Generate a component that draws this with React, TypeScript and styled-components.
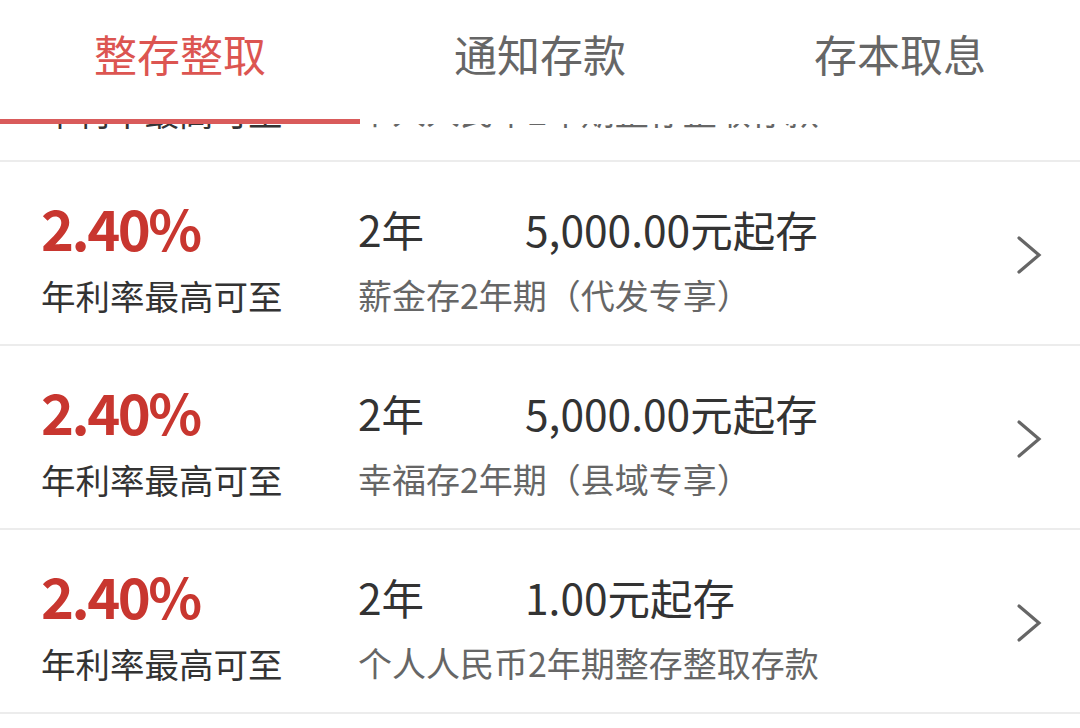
import React, { useState } from 'react'
import styled, { createGlobalStyle } from 'styled-components'

const GlobalStyle = createGlobalStyle`
  html, body {
    margin: 0;
    padding: 0;
    background: #ffffff;
  }
  body {
    font-family: "Noto Sans CJK SC", "Noto Sans", sans-serif;
    -webkit-font-smoothing: antialiased;
  }
`

const Page = styled.div`
  height: 728px;
  overflow: hidden;
  background: #ffffff;
`

const TabBar = styled.div`
  position: sticky;
  top: 0;
  z-index: 2;
  display: grid;
  grid-template-columns: repeat(3, 1fr);
  height: 124px;
  background: #ffffff;
`

const Tab = styled.div<{ $active?: boolean }>`
  box-sizing: border-box;
  height: 124px;
  padding-top: 23px;
  text-align: center;
  font-size: 43px;
  line-height: 60px;
  color: ${p => (p.$active ? '#dc5551' : '#666666')};
  border-bottom: 5px solid ${p => (p.$active ? '#d95b5b' : 'transparent')};
  cursor: pointer;
`

// 첫 줄은 탭 아래로 스크롤된 상태
const List = styled.div`
  margin-top: -146px;
`

const Row = styled.div`
  box-sizing: border-box;
  display: flex;
  align-items: flex-start;
  height: 184px;
  padding: 35px 0 0 41px;
  border-bottom: 2px solid #ececec;
`

const RateCol = styled.div`
  display: flex;
  flex-direction: column;
  gap: 18px;
  width: 317px;
  flex-shrink: 0;
`

const Rate = styled.div`
  font-size: 56px;
  line-height: 60px;
  font-weight: 700;
  color: #c8362f;
  letter-spacing: -2.5px;
`

const RateLabel = styled.div`
  font-size: 34.5px;
  line-height: 40px;
  color: #333333;
`

const InfoCol = styled.div`
  display: flex;
  flex-direction: column;
  gap: 14px;
`

const InfoTop = styled.div`
  display: flex;
  font-size: 42.5px;
  line-height: 64px;
  color: #333333;
`

const Term = styled.span`
  width: 167px;
`

const Desc = styled.div`
  font-size: 34px;
  line-height: 40px;
  color: #666666;
`

const Arrow = styled.svg`
  margin: 38px 38px 0 auto;
  flex-shrink: 0;
`

type Product = {
  rate: string
  term: string
  amount: string
  name: string
}

const products: Product[] = [
  { rate: '2.40%', term: '2年', amount: '1.00元起存', name: '个人人民币2年期整存整取存款' },
  { rate: '2.40%', term: '2年', amount: '5,000.00元起存', name: '薪金存2年期（代发专享）' },
  { rate: '2.40%', term: '2年', amount: '5,000.00元起存', name: '幸福存2年期（县域专享）' },
  { rate: '2.40%', term: '2年', amount: '1.00元起存', name: '个人人民币2年期整存整取存款' },
]

const tabs = ['整存整取', '通知存款', '存本取息']

function App() {
  const [active, setActive] = useState(0)

  return (
    <>
      <GlobalStyle />
      <Page>
        <TabBar>
          {tabs.map((t, i) => (
            <Tab key={t} $active={i === active} onClick={() => setActive(i)}>
              {t}
            </Tab>
          ))}
        </TabBar>
        <List>
          {products.map((p, i) => (
            <Row key={i}>
              <RateCol>
                <Rate>{p.rate}</Rate>
                <RateLabel>年利率最高可至</RateLabel>
              </RateCol>
              <InfoCol>
                <InfoTop>
                  <Term>{p.term}</Term>
                  <span>{p.amount}</span>
                </InfoTop>
                <Desc>{p.name}</Desc>
              </InfoCol>
              <Arrow width="26" height="40" viewBox="0 0 26 40">
                <polyline
                  points="3,3 23,20 3,37"
                  fill="none"
                  stroke="#666666"
                  strokeWidth="3.2"
                  strokeLinecap="round"
                  strokeLinejoin="miter"
                />
              </Arrow>
            </Row>
          ))}
        </List>
      </Page>
    </>
  )
}

export default App
